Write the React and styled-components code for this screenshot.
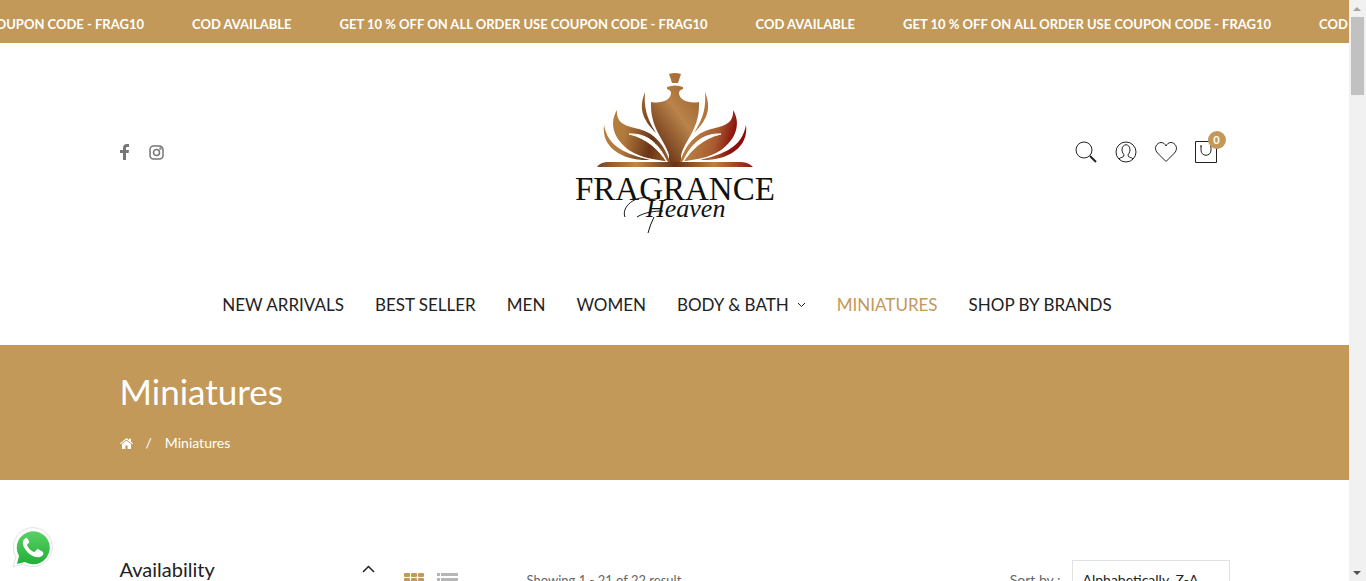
import React from "react";
import styled, { createGlobalStyle } from "styled-components";

const GOLD = "#c29958";

const GlobalStyle = createGlobalStyle`
  *, *::before, *::after { box-sizing: border-box; }
  body { margin: 0; background: #fff; color: #222; font: 14px/24px Lato, "Open Sans", sans-serif; }
  a { color: inherit; text-decoration: none; }
  button { border: 0; padding: 0; background: none; color: inherit; font: inherit; cursor: pointer; }
  ul, ol { list-style: none; margin: 0; padding: 0; }
  svg { display: block; }
`;

const Shell = styled.div`
  display: flex;
  height: 100vh;
  overflow: hidden;
`;

const Page = styled.div`
  flex: 1;
  min-width: 0;
  overflow: hidden;
`;

const Container = styled.div`
  max-width: 1140px;
  margin: 0 auto;
  padding: 0 15px;
`;

const Ticker = styled.div`
  overflow: hidden;
  background: ${GOLD};
  color: #fff;
`;

const TickerTrack = styled.div`
  display: flex;
  gap: 48px;
  width: max-content;
  margin-left: -224px;
  padding: 14px 0 9px;
  font-size: 13px;
  font-weight: 700;
  line-height: 20px;
  white-space: nowrap;
`;

const TickerItem = styled.span`
  flex: none;
`;

const HeaderRow = styled.div`
  display: grid;
  grid-template-columns: 1fr auto 1fr;
  align-items: center;
  height: 218px;
`;

const Social = styled.div`
  display: flex;
  align-items: center;
  gap: 20px;
  color: #777;
`;

const Actions = styled.div`
  display: flex;
  justify-content: flex-end;
  gap: 18px;
  padding-right: 13px;
  color: #222;
`;

const ActionButton = styled.button`
  position: relative;
`;

const Badge = styled.span`
  position: absolute;
  top: -10px;
  right: -9px;
  width: 18px;
  border-radius: 50%;
  background: ${GOLD};
  color: #fff;
  font-size: 11px;
  font-weight: 700;
  line-height: 18px;
  text-align: center;
`;

const Nav = styled.nav`
  display: flex;
  justify-content: center;
  gap: 31px;
  padding: 32px 0 28px;
  margin-right: 15px;
  font-size: 17px;
  line-height: 24px;
  white-space: nowrap;
`;

const NavLink = styled.a`
  display: flex;
  align-items: center;
  gap: 8px;
  color: ${(p) => (p.$active ? GOLD : "#222")};
`;

const Banner = styled.section`
  padding: 24px 0 25px;
  background: ${GOLD};
  color: #fff;
`;

const BannerTitle = styled.h1`
  margin: 0 0 18px;
  font-size: 35px;
  font-weight: 400;
  line-height: 44px;
`;

const Crumbs = styled.ol`
  display: flex;
  align-items: center;
  gap: 13px;
`;

const Listing = styled.div`
  display: flex;
  align-items: flex-start;
  padding-top: 80px;
`;

const FilterToggle = styled.button`
  display: flex;
  flex: 0 0 255px;
  align-items: center;
  justify-content: space-between;
  margin-right: 29px;
  font-size: 20px;
  line-height: 18px;
`;

const Toolbar = styled.div`
  display: flex;
  flex: 1;
  align-items: center;
  height: 40px;
  color: #666;
`;

const Views = styled.div`
  display: flex;
  gap: 13px;
  width: 123px;
`;

const Count = styled.span`
  font-size: 13px;
`;

const SortLabel = styled.label`
  margin-left: auto;
`;

const SortSelect = styled.select`
  width: 158px;
  height: 40px;
  margin-left: 11px;
  padding: 0 10px;
  appearance: none;
  border: 1px solid #e1e1e1;
  border-radius: 0;
  background: #fff;
  color: #222;
  font: inherit;
`;

const WhatsApp = styled.a`
  position: fixed;
  left: 12px;
  bottom: 12px;
`;

const ScrollTrack = styled.div`
  display: flex;
  flex: 0 0 17px;
  flex-direction: column;
  align-items: center;
  background: #f1f1f1;
`;

const ScrollThumb = styled.div`
  width: 13px;
  height: 78px;
  margin-bottom: auto;
  background: #c1c1c1;
`;

const Outline = ({ size = 22, children, width = 1 }) => (
  <svg width={size} height={size} viewBox={`0 0 ${size} ${size}`} fill="none" stroke="currentColor" strokeWidth={width}>
    {children}
  </svg>
);

function Logo() {
  return (
    <svg width="202" height="164" viewBox="574 70 202 164" role="img" aria-label="Fragrance Heaven">
      <defs>
        <linearGradient id="leaf" gradientUnits="userSpaceOnUse" x1="600" y1="115" x2="752" y2="150">
          <stop offset="0" stopColor="#b8803f" />
          <stop offset=".18" stopColor="#b17a3c" />
          <stop offset=".36" stopColor="#6a3417" />
          <stop offset=".6" stopColor="#b98143" />
          <stop offset=".76" stopColor="#a85a30" />
          <stop offset=".86" stopColor="#8c1510" />
          <stop offset="1" stopColor="#8b0000" />
        </linearGradient>
        <linearGradient id="flask" gradientUnits="userSpaceOnUse" x1="655" y1="142" x2="699" y2="110">
          <stop offset="0" stopColor="#6f3818" />
          <stop offset=".65" stopColor="#b9834a" />
          <stop offset="1" stopColor="#a86f38" />
        </linearGradient>
        <linearGradient id="base" gradientUnits="userSpaceOnUse" x1="597" y1="0" x2="753" y2="0">
          <stop offset="0" stopColor="#7c4320" />
          <stop offset=".25" stopColor="#bd8947" />
          <stop offset=".5" stopColor="#693215" />
          <stop offset=".75" stopColor="#b98143" />
          <stop offset="1" stopColor="#8f160f" />
        </linearGradient>
      </defs>
      <g fill="url(#flask)">
        <path d="M669 74q6-2 12 0l-3 9h-6z" />
        <path d="M667 87q8-3 16 0v2q-4 1-4 4c0 7 10 11 20 9 1 24-11 35-17 50q-2 5 0 10h-14q2-5 0-10c-6-15-18-26-17-50 10 2 20-2 20-9q0-3-4-4z" />
      </g>
      <g fill="url(#leaf)">
        <path d="M645 92c-6 15-4 26 11 41-10-16-12-26-11-41z" />
        <path d="M705 92c6 15 4 26-11 41 10-16 12-26 11-41z" />
        <path d="M617 110c-1 13 8 16 22 19 16 4 26 17 31 33-11-2-24-3-36-9-14-7-28-25-17-43z" />
        <path d="M733 110c1 13-8 16-22 19-16 4-26 17-31 33 11-2 24-3 36-9 14-7 28-25 17-43z" />
        <path d="M604 125c4 22 22 29 46 35-27 1-49-12-46-35z" />
        <path d="M746 125c-4 22-22 29-46 35 27 1 49-12 46-35z" />
      </g>
      <path
        d="M629 134c20-1 31 12 38 28-8-12-20-24-38-28zM721 134c-20-1-31 12-38 28 8-12 20-24 38-28z"
        fill="#fff"
        stroke="#fff"
      />
      <path d="M597 167c4-5 8-5 14-5h128c6 0 10 1 14 5z" fill="url(#base)" />
      <text x="575" y="200" fontFamily="Liberation Serif, serif" fontSize="33" fill="#111">FRAGRANCE</text>
      <path d="M625 217c-4-10 10-22 25-19M637 217c8-5 18-6 26-6M654 217q-4 8-6 16" fill="none" stroke="#111" />
      <text x="646" y="217" fontFamily="Liberation Serif, serif" fontSize="26" fontStyle="italic" fill="#111">Heaven</text>
    </svg>
  );
}

const OFFERS = [
  "GET 10 % OFF ON ALL ORDER USE COUPON CODE - FRAG10",
  "COD AVAILABLE",
];

const LINKS = ["NEW ARRIVALS", "BEST SELLER", "MEN", "WOMEN", "BODY & BATH", "MINIATURES", "SHOP BY BRANDS"];

export default function App() {
  return (
    <Shell>
      <GlobalStyle />
      <Page>
        <Ticker>
          <TickerTrack>
            {[...OFFERS, ...OFFERS, ...OFFERS].map((text, i) => (
              <TickerItem key={i}>{text}</TickerItem>
            ))}
          </TickerTrack>
        </Ticker>
        <header>
          <Container>
            <HeaderRow>
              <Social>
                <a href="#facebook" aria-label="Facebook">
                  <svg width="9" height="16" viewBox="0 0 9 16" fill="currentColor">
                    <path d="M9 0v3H7.500C6.300 3 6 3.500 6 4.300V6h3l-.4 3H6v7H3V9H0V6h3V3.800C3 1.300 4.500 0 6.800 0z" />
                  </svg>
                </a>
                <a href="#instagram" aria-label="Instagram">
                  <Outline size={15} width={1.5}>
                    <rect x="1" y="1" width="13" height="13" rx="3.5" />
                    <circle cx="7.500" cy="7.500" r="3" />
                    <circle cx="11.500" cy="3.500" r=".5" />
                  </Outline>
                </a>
              </Social>
              <a href="#home"><Logo /></a>
              <Actions>
                <ActionButton aria-label="Search">
                  <Outline><circle cx="9" cy="9" r="8" /><path d="m15 15 6 6" strokeWidth="2" /></Outline>
                </ActionButton>
                <ActionButton aria-label="Account">
                  <Outline>
                    <circle cx="11" cy="11" r="10" />
                    <path d="M4 18c1-2 5-1 5-4 0-1-2-2-2-5 0-7 8-7 8 0 0 3-2 4-2 5 0 3 4 2 5 4" />
                  </Outline>
                </ActionButton>
                <ActionButton aria-label="Wishlist">
                  <Outline><path d="M11 20.500 2.500 12C-2 7 2 1.500 6 1.500c2.500 0 4 1.500 5 3.500 1-2 2.500-3.500 5-3.500 4 0 8 5.500 3.500 10.500z" /></Outline>
                </ActionButton>
                <ActionButton aria-label="Cart">
                  <Outline><path d="M.5.5h21v21H.5zM5 5h2M15 5h2M6 5v4c0 7 10 7 10 0V5" /></Outline>
                  <Badge>0</Badge>
                </ActionButton>
              </Actions>
            </HeaderRow>
            <Nav>
              {LINKS.map((text) => (
                <NavLink key={text} href="#collection" $active={text === "MINIATURES"}>
                  {text}
                  {text === "BODY & BATH" && (
                    <svg width="9" height="6" fill="none" stroke="currentColor"><path d="m1 1 3.500 3.500L8 1" /></svg>
                  )}
                </NavLink>
              ))}
            </Nav>
          </Container>
        </header>
        <Banner>
          <Container>
            <BannerTitle>Miniatures</BannerTitle>
            <Crumbs>
              <li>
                <a href="#home" aria-label="Home">
                  <svg width="13" height="11" viewBox="0 0 13 11" fill="currentColor">
                    <path d="M6.500 0 9 2V.8h2v3l2 1.700-.7.8-5.800-4.800L.7 6.300 0 5.500zM6.500 2.500 11 6.200V11H7.600V7.500H5.400V11H2V6.200z" />
                  </svg>
                </a>
              </li>
              <li>/</li>
              <li>Miniatures</li>
            </Crumbs>
          </Container>
        </Banner>
        <Container as="main">
          <Listing>
            <FilterToggle>
              Availability
              <svg width="13" height="8" fill="none" stroke="currentColor" strokeWidth="1.500"><path d="m1 7 5.500-5.500L12 7" /></svg>
            </FilterToggle>
            <Toolbar>
              <Views>
                <button aria-label="Grid view">
                  <svg width="20" height="14" fill={GOLD}>
                    {[0, 7, 14].map((x) => [0, 5, 10].map((y) => <rect key={`${x}-${y}`} x={x} y={y} width="6" height="4" rx="1" />))}
                  </svg>
                </button>
                <button aria-label="List view">
                  <svg width="21" height="14" fill="#b5b5b5">
                    {[0, 5, 10].map((y) => <path key={y} d={`M0 ${y}h3v3H0zM4 ${y}h17v3H4z`} />)}
                  </svg>
                </button>
              </Views>
              <Count>Showing 1 - 21 of 22 result</Count>
              <SortLabel htmlFor="sort">Sort by :</SortLabel>
              <SortSelect id="sort" defaultValue="za">
                <option value="az">Alphabetically, A-Z</option>
                <option value="za">Alphabetically, Z-A</option>
              </SortSelect>
            </Toolbar>
          </Listing>
        </Container>
      </Page>
      <ScrollTrack aria-hidden="true">
        <svg width="17" height="17" fill="#a3a3a3"><path d="M4 11h8L8 7z" /></svg>
        <ScrollThumb />
        <svg width="17" height="17" fill="#505050"><path d="M4 7h8l-4 4z" /></svg>
      </ScrollTrack>
      <WhatsApp href="#whatsapp" aria-label="WhatsApp">
        <svg width="41" height="42" viewBox="0 0 41 42">
          <defs>
            <linearGradient id="wa" x2="0" y2="1"><stop stopColor="#5bd066" /><stop offset="1" stopColor="#20b038" /></linearGradient>
          </defs>
          <path d="m1 40 3-10A19.500 19.500 0 1 1 11 37z" fill="#fff" stroke="#e2e2e2" />
          <path d="m5 37 2-8A16.500 16.500 0 1 1 13 35z" fill="url(#wa)" />
          <path d="M14 11c-4 2-4 6-1 11 4 6 10 9 15 8 3-1 4-3 3-5l-5-3c-2 0-2 3-4 3-3-1-6-4-7-7 0-1 3-2 2-4l-2-3z" fill="#fff" />
        </svg>
      </WhatsApp>
    </Shell>
  );
}
